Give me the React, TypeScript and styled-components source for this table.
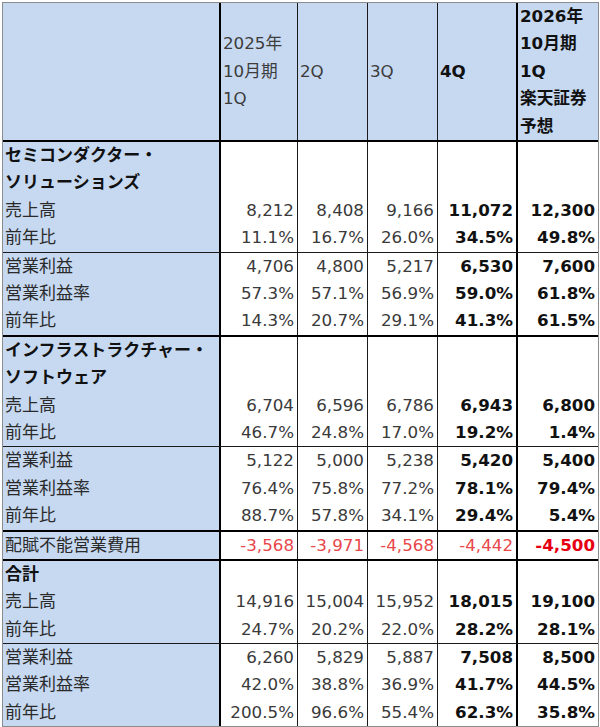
import React from 'react';
import styled, { createGlobalStyle } from 'styled-components';

const Global = createGlobalStyle`
  html, body { margin: 0; padding: 0; background: #fff; }
  body {
    padding: 2px;
    font-family: "DejaVu Sans", "Noto Sans CJK JP", sans-serif;
    font-size: 16.7px;
    color: #333;
  }
`;

const Table = styled.div`
  width: 597px;
  box-sizing: border-box;
  border: 1px solid #8c8c8c;
  display: flex;
  flex-direction: column;
`;

type Edge = 'thick' | 'thin' | 'none';
const edge = (e: Edge) =>
  e === 'thick' ? '2px solid #000' : e === 'thin' ? '1px solid #1a1a1a' : 'none';

const Band = styled.div<{ $bottom: Edge }>`
  display: grid;
  grid-template-columns: 218px 77px 70px 70px 80px 80px;
  border-bottom: ${(p) => edge(p.$bottom)};
`;

const rightEdges: Edge[] = ['thick', 'thin', 'thin', 'thin', 'thick', 'none'];

const Cell = styled.div<{ $col: number; $blue?: boolean }>`
  box-sizing: border-box;
  border-right: ${(p) => edge(rightEdges[p.$col])};
  background: ${(p) => (p.$blue ? '#c6d9f1' : '#fff')};
  display: flex;
  flex-direction: column;
  justify-content: center;
  min-width: 0;
`;

const HeadText = styled.div<{ $bold?: boolean }>`
  padding-left: 2px;
  line-height: 27.4px;
  white-space: nowrap;
  font-weight: ${(p) => (p.$bold ? 700 : 400)};
  color: ${(p) => (p.$bold ? '#111' : '#3c3c3c')};
`;

const Label = styled.div<{ $bold?: boolean }>`
  padding-left: 2px;
  height: 27.4px;
  line-height: 27.4px;
  white-space: nowrap;
  font-size: 17px;
  font-weight: ${(p) => (p.$bold ? 700 : 400)};
  color: ${(p) => (p.$bold ? '#111' : '#2a2a2a')};
`;

const Value = styled.div<{ $bold?: boolean; $red?: boolean }>`
  padding-right: 3px;
  height: 27.4px;
  line-height: 27.4px;
  text-align: right;
  white-space: nowrap;
  font-weight: ${(p) => (p.$bold ? 700 : 400)};
  color: ${(p) => (p.$red ? (p.$bold ? '#e60012' : '#e8474b') : p.$bold ? '#111' : '#3a3a3a')};
`;

type Row = { label: string; vals: string[] };
type Group = { heading?: string[]; rows: Row[]; bottom: Edge; red?: boolean; bold?: boolean[] };

const defaultBold = [false, false, false, true, true];

const groups: Group[] = [
  {
    heading: ['セミコンダクター・', 'ソリューションズ'],
    rows: [
      { label: '売上高', vals: ['8,212', '8,408', '9,166', '11,072', '12,300'] },
      { label: '前年比', vals: ['11.1%', '16.7%', '26.0%', '34.5%', '49.8%'] },
    ],
    bottom: 'thin',
  },
  {
    rows: [
      { label: '営業利益', vals: ['4,706', '4,800', '5,217', '6,530', '7,600'] },
      { label: '営業利益率', vals: ['57.3%', '57.1%', '56.9%', '59.0%', '61.8%'] },
      { label: '前年比', vals: ['14.3%', '20.7%', '29.1%', '41.3%', '61.5%'] },
    ],
    bottom: 'thick',
  },
  {
    heading: ['インフラストラクチャー・', 'ソフトウェア'],
    rows: [
      { label: '売上高', vals: ['6,704', '6,596', '6,786', '6,943', '6,800'] },
      { label: '前年比', vals: ['46.7%', '24.8%', '17.0%', '19.2%', '1.4%'] },
    ],
    bottom: 'thin',
  },
  {
    rows: [
      { label: '営業利益', vals: ['5,122', '5,000', '5,238', '5,420', '5,400'] },
      { label: '営業利益率', vals: ['76.4%', '75.8%', '77.2%', '78.1%', '79.4%'] },
      { label: '前年比', vals: ['88.7%', '57.8%', '34.1%', '29.4%', '5.4%'] },
    ],
    bottom: 'thick',
  },
  {
    rows: [{ label: '配賦不能営業費用', vals: ['-3,568', '-3,971', '-4,568', '-4,442', '-4,500'] }],
    bottom: 'thick',
    red: true,
    bold: [false, false, false, false, true],
  },
  {
    heading: ['合計'],
    rows: [
      { label: '売上高', vals: ['14,916', '15,004', '15,952', '18,015', '19,100'] },
      { label: '前年比', vals: ['24.7%', '20.2%', '22.0%', '28.2%', '28.1%'] },
    ],
    bottom: 'thin',
  },
  {
    rows: [
      { label: '営業利益', vals: ['6,260', '5,829', '5,887', '7,508', '8,500'] },
      { label: '営業利益率', vals: ['42.0%', '38.8%', '36.9%', '41.7%', '44.5%'] },
      { label: '前年比', vals: ['200.5%', '96.6%', '55.4%', '62.3%', '35.8%'] },
    ],
    bottom: 'none',
  },
];

const headers: { lines: string[]; bold?: boolean }[] = [
  { lines: ['2025年', '10月期', '1Q'] },
  { lines: ['2Q'] },
  { lines: ['3Q'] },
  { lines: ['4Q'], bold: true },
  { lines: ['2026年', '10月期', '1Q', '楽天証券', '予想'], bold: true },
];

export default function App() {
  return (
    <>
      <Global />
      <Table>
        <Band $bottom="thick">
          <Cell $col={0} $blue />
          {headers.map((h, i) => (
            <Cell key={i} $col={i + 1} $blue>
              {h.lines.map((l) => (
                <HeadText key={l} $bold={h.bold}>
                  {l}
                </HeadText>
              ))}
            </Cell>
          ))}
        </Band>
        {groups.map((g, gi) => (
          <Band key={gi} $bottom={g.bottom}>
            <Cell $col={0} $blue>
              {g.heading?.map((h) => (
                <Label key={h} $bold>
                  {h}
                </Label>
              ))}
              {g.rows.map((r, ri) => (
                <Label key={ri}>{r.label}</Label>
              ))}
            </Cell>
            {(g.bold ?? defaultBold).map((b, ci) => (
              <Cell key={ci} $col={ci + 1}>
                {g.heading?.map((h) => (
                  <Value key={h} />
                ))}
                {g.rows.map((r, ri) => (
                  <Value key={ri} $bold={b} $red={g.red}>
                    {r.vals[ci]}
                  </Value>
                ))}
              </Cell>
            ))}
          </Band>
        ))}
      </Table>
    </>
  );
}
